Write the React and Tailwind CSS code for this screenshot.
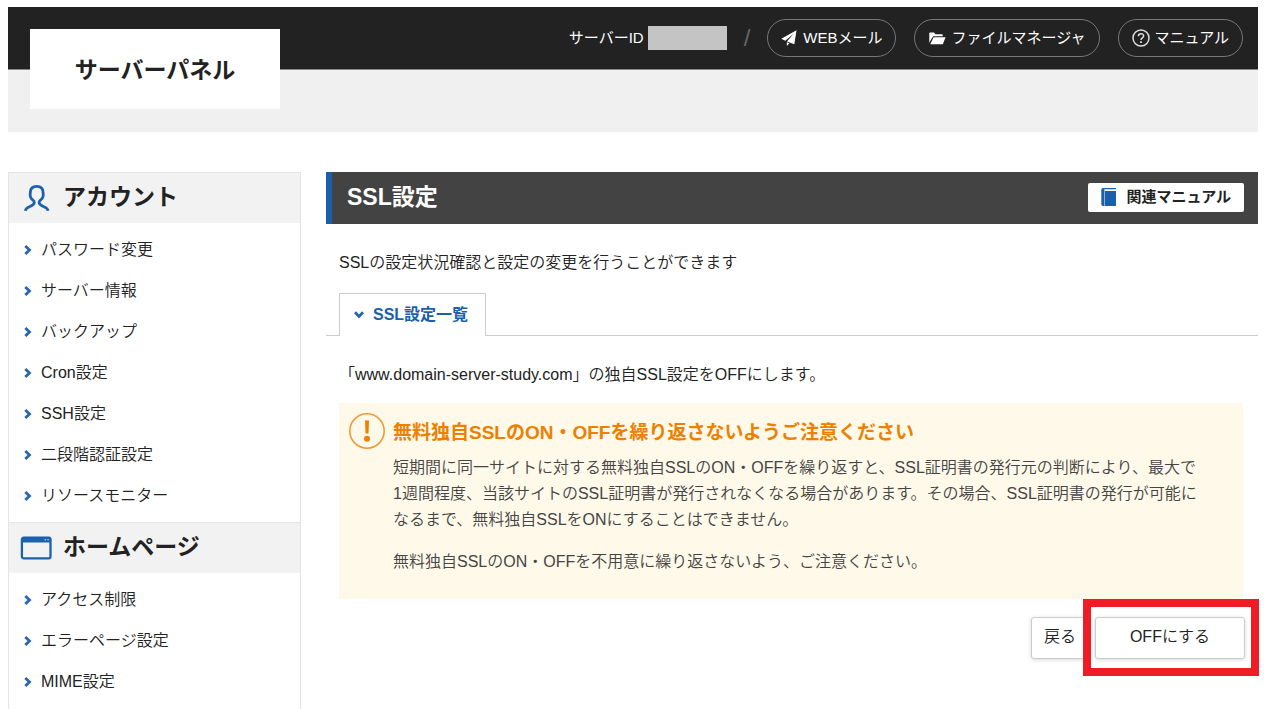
const sections = [
  {
    title: "アカウント",
    icon: "user",
    items: ["パスワード変更", "サーバー情報", "バックアップ", "Cron設定", "SSH設定", "二段階認証設定", "リソースモニター"],
  },
  {
    title: "ホームページ",
    icon: "window",
    items: ["アクセス制限", "エラーページ設定", "MIME設定"],
  },
];

function UserIcon() {
  return (
    <svg width="32" height="28" viewBox="0 0 32 28" fill="none" stroke="#1d61ab" strokeWidth="2.8" strokeLinejoin="round" aria-hidden="true">
      <path d="M5.300 26.800C5.600 24.500 7 23.700 9.500 22.700C12.500 21.500 14.300 20.300 14.300 18.300C14.300 16 11.400 15.800 10.600 13.200C9.700 11.500 10.300 10.300 10.300 8.500C10.300 4.300 12.600 2.400 16.700 2.400C20.800 2.400 23.100 4.300 23.100 8.500C23.100 10.300 23.700 11.500 22.800 13.200C22 15.800 19.100 16 19.100 18.300C19.100 20.300 20.900 21.500 23.900 22.700C26.400 23.700 27.800 24.500 28.100 26.800" />
    </svg>
  );
}

function WindowIcon() {
  return (
    <svg width="32" height="24" viewBox="0 0 32 24" fill="none" aria-hidden="true">
      <rect x="1.900" y="1.700" width="28.600" height="20.600" rx="1.800" stroke="#1d61ab" strokeWidth="2.300" />
      <path d="M2 1.500H30.600V6.500H2Z" fill="#1d61ab" />
      <circle cx="25.200" cy="3.800" r="0.800" fill="#c6d7ea" />
      <circle cx="28" cy="3.800" r="0.800" fill="#c6d7ea" />
    </svg>
  );
}

function Chevron({ down }) {
  return (
    <svg className={down ? "rotate-90" : ""} width="8" height="10" viewBox="0 0 8 10" fill="none" stroke="#2866ad" strokeWidth="2.800" aria-hidden="true">
      <path d="M1.300 1L5.500 5L1.300 9" />
    </svg>
  );
}

function PlaneIcon() {
  return (
    <svg width="16" height="16" viewBox="0 0 16 16" fill="#fff" aria-hidden="true">
      <path d="M15.500 0.300L0.300 8.800L4.300 10.700L12.500 3.800L6 11.500L13.300 14.300Z" />
      <path d="M5.800 12.300L8.300 13.300L5.900 16Z" />
    </svg>
  );
}

function FolderIcon() {
  return (
    <svg width="17" height="13" viewBox="0 0 17 13" fill="#fff" aria-hidden="true">
      <path d="M0.300 1.200Q0.300 0.500 1 0.500H5L6.500 2.200H13Q13.800 2.200 13.800 3V4.200H4.200L1.600 8.300L0.300 11Z" />
      <path d="M4.600 5.200H16.600L13.800 12.300H1.200Z" />
    </svg>
  );
}

function HelpIcon() {
  return (
    <svg width="18" height="18" viewBox="0 0 18 18" fill="none" stroke="#ddd" strokeWidth="1.500" aria-hidden="true">
      <circle cx="9" cy="9" r="8" />
      <path d="M6.400 7.200C6.400 3.800 11.700 3.900 11.600 7C11.600 8.900 9 8.900 9 11" />
      <path d="M9 12.200V13.900" strokeWidth="1.800" />
    </svg>
  );
}

function BookIcon() {
  return (
    <svg width="16" height="18" viewBox="0 0 16 18" aria-hidden="true">
      <path d="M2 0H15V1.200H4V3H15V18H2Q0.300 18 0.300 16V2Q0.300 0 2 0Z" fill="#1b5faa" />
      <path d="M3.500 0.800V18" stroke="#8fb1d6" strokeWidth="1" />
    </svg>
  );
}

function AlertIcon() {
  return (
    <svg className="shrink-0" width="36" height="36" viewBox="0 0 36 36" fill="none" aria-hidden="true">
      <circle cx="18" cy="18" r="17.200" stroke="#f29a38" strokeWidth="1.600" />
      <path d="M16 7.500H20L19.500 20.500H16.500Z" fill="#ee8000" />
      <circle cx="18" cy="25.800" r="3" fill="#ee8000" />
    </svg>
  );
}

const pill = "flex h-[38px] items-center rounded-full border border-[#777] text-[15px] font-normal text-white";
const action = "h-[42px] rounded-[3px] border border-[#ccc] bg-white pb-0.5 text-base shadow-[0_1px_4px_rgba(0,0,0,0.15)]";

export default function App() {
  return (
    <div
      lang="ja"
      className="flex min-h-screen flex-col bg-white pt-[7px] pr-[22px] pl-2 font-['Liberation_Sans','Noto_Sans_CJK_JP',sans-serif] text-base font-[350] text-[#222]"
    >
      <header className="relative border-b-[62px] border-[#f0f0f0]">
        <div className="flex h-[63px] items-center justify-end border-b border-[#888] bg-[#222] pr-[15px]">
          <span className="text-[15px] font-normal text-white">サーバーID</span>
          <span className="ml-1 h-6 w-[79px] bg-[#c4c4c4]" />
          <span className="mx-[17px] text-2xl text-[#666]">/</span>
          <nav className="flex gap-[18px]">
            <a href="#mail" className={`${pill} gap-1.5 px-[13px]`}>
              <PlaneIcon />
              WEBメール
            </a>
            <a href="#files" className={`${pill} gap-[5px] px-3.5`}>
              <FolderIcon />
              ファイルマネージャ
            </a>
            <a href="#manual" className={`${pill} gap-1 px-[13px]`}>
              <HelpIcon />
              マニュアル
            </a>
          </nav>
        </div>
        <a href="#top" className="absolute top-[22px] left-[22px] flex h-20 w-[250px] items-center justify-center bg-white pt-0.5 text-[23px] font-bold">
          サーバーパネル
        </a>
      </header>

      <div className="flex flex-1 gap-[25px] pt-10">
        <aside className="w-[293px] shrink-0 border-x border-[#e5e5e5]">
          {sections.map((section) => (
            <section key={section.title}>
              <h2 className="flex h-[51px] items-center gap-[11px] border-t border-[#e5e5e5] bg-[#f2f2f2] pl-[11px] text-[23px] font-bold">
                {section.icon === "user" ? <UserIcon /> : <WindowIcon />}
                <span className="pb-0.5">{section.title}</span>
              </h2>
              <ul className="py-1.5">
                {section.items.map((item) => (
                  <li key={item}>
                    <a href="#menu" className="flex h-[41px] items-center gap-[9px] pl-[15px]">
                      <Chevron />
                      {item}
                    </a>
                  </li>
                ))}
              </ul>
            </section>
          ))}
        </aside>

        <main className="min-w-0 flex-1">
          <div className="flex h-[52px] items-center justify-between border-l-[6px] border-[#1b5faa] bg-[#434343] pr-3.5 pb-0.5 pl-[15px]">
            <h1 className="text-[23px] font-bold text-white">SSL設定</h1>
            <a href="#related" className="flex h-[29px] items-center gap-[9px] rounded-[2px] bg-white px-[13px] text-[15px] font-bold">
              <BookIcon />
              関連マニュアル
            </a>
          </div>
          <p className="mt-[27px] pl-[13px] leading-6">SSLの設定状況確認と設定の変更を行うことができます</p>
          <div className="mt-[18px] flex border-b border-[#ccc] pl-[13px]">
            <button type="button" className="-mb-px flex h-[43px] items-center gap-2.5 border border-b-0 border-[#ccc] bg-white pr-[17px] pl-[15px] font-bold text-[#1b5faa]">
              <Chevron down />
              SSL設定一覧
            </button>
          </div>
          <div className="pr-[15px] pl-[13px]">
            <p className="mt-[27px] leading-6">「www.domain-server-study.com」の独自SSL設定をOFFにします。</p>
            <div className="mt-4 flex min-h-[196px] gap-2 bg-[#fff9ea] pt-2.5 pr-11 pb-6 pl-2.5">
              <AlertIcon />
              <div className="min-w-0 flex-1 leading-[26px] text-[#444]">
                <h2 className="mt-[7px] mb-[9px] text-[19px] leading-[26px] font-bold text-[#ee8000]">無料独自SSLのON・OFFを繰り返さないようご注意ください</h2>
                <p>
                  短期間に同一サイトに対する無料独自SSLのON・OFFを繰り返すと、SSL証明書の発行元の判断により、最大で1週間程度、当該サイトのSSL証明書が発行されなくなる場合があります。その場合、SSL証明書の発行が可能になるまで、無料独自SSLをONにすることはできません。
                </p>
                <p className="mt-4">無料独自SSLのON・OFFを不用意に繰り返さないよう、ご注意ください。</p>
              </div>
            </div>
          </div>
          <div className="mt-[18px] flex justify-end gap-1.5 pr-[13px]">
            <button type="button" className={`${action} px-3`}>戻る</button>
            <div className="relative">
              <button type="button" className={`${action} w-[150px]`}>OFFにする</button>
              <div className="pointer-events-none absolute -top-[18px] -right-3.5 -bottom-[17px] -left-3 border-8 border-[#ee1c25]" />
            </div>
          </div>
        </main>
      </div>
    </div>
  );
}
